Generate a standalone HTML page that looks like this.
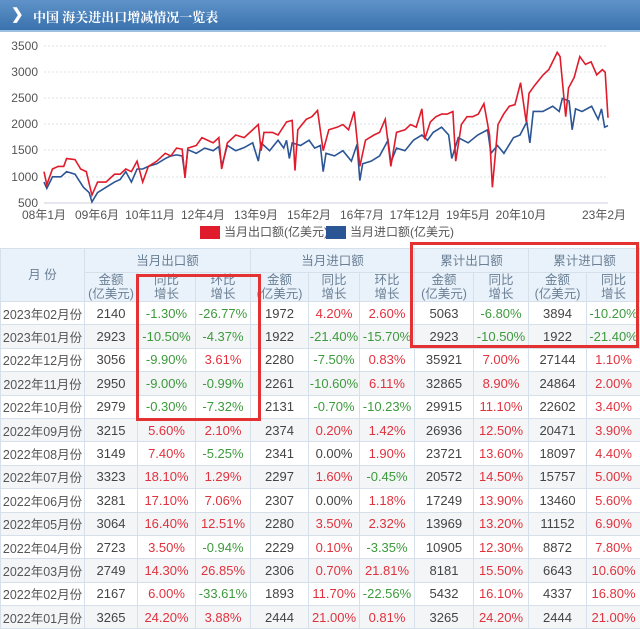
<!DOCTYPE html>
<html><head><meta charset="utf-8"><style>
*{margin:0;padding:0;box-sizing:border-box}
body{width:640px;height:616px;overflow:hidden;background:#fff;font-family:"Liberation Sans","Noto Sans CJK SC",sans-serif;position:relative}
.hdr{position:absolute;left:0;top:0;width:640px;height:32px;background:linear-gradient(#5f93c8,#3a72ae);border-bottom:2px solid #9dbfe0}
.hdr span{position:absolute;left:33px;top:7px;color:#fff;font-size:13px;font-weight:bold;font-family:"Noto Serif CJK SC","Liberation Serif",serif}
.hdr b{position:absolute;left:11px;top:5px;color:#fff;font-size:15px}
svg{position:absolute;left:0;top:34px}
table{position:absolute;left:0;top:248px;border-collapse:collapse;table-layout:fixed;width:640px}
td{border:1px solid #d5e0ea;text-align:center;font-size:13px;color:#444;height:23.4px;padding:0;white-space:nowrap}
tr.h td{background:#e9f2fa;color:#6a7f95;font-size:12.5px;line-height:14px}
tr.g td{background:#f3f5f7}
td.m{color:#555;font-size:12.5px}
.r{color:#e0323e}.gr{color:#3d9a3d}
.box{position:absolute;border:3px solid #e43232}
</style></head><body>
<div class="hdr"><b>&#x276F;</b><span>中国 海关进出口增减情况一览表</span></div>
<svg width="640" height="214" viewBox="0 34 640 214">
<g stroke="#dde3ea" stroke-dasharray="2,2" stroke-width="1">
<line x1="44" x2="608" y1="46" y2="46"/><line x1="44" x2="608" y1="72" y2="72"/><line x1="44" x2="608" y1="98" y2="98"/><line x1="44" x2="608" y1="124" y2="124"/><line x1="44" x2="608" y1="150" y2="150"/><line x1="44" x2="608" y1="177" y2="177"/>
</g>
<line x1="44" x2="608" y1="203" y2="203" stroke="#ccd" />
<g font-size="12" fill="#555" text-anchor="end"><text x="38" y="50">3500</text><text x="38" y="76">3000</text><text x="38" y="102">2500</text><text x="38" y="128">2000</text><text x="38" y="154">1500</text><text x="38" y="181">1000</text><text x="38" y="207">500</text></g>
<g font-size="12" fill="#555" text-anchor="middle"><text x="44" y="219">08年1月</text><text x="97" y="219">09年6月</text><text x="150" y="219">10年11月</text><text x="203" y="219">12年4月</text><text x="256" y="219">13年9月</text><text x="309" y="219">15年2月</text><text x="362" y="219">16年7月</text><text x="415" y="219">17年12月</text><text x="468" y="219">19年5月</text><text x="521" y="219">20年10月</text><text x="604" y="219">23年2月</text></g>
<g transform="translate(44,229.15) scale(2.82,-0.0523)" fill="none">
<polyline vector-effect="non-scaling-stroke" stroke="#2b5595" stroke-width="1.6" points="0,900 1,780 3,1000 6,1000 8,1100 11,1050 14,800 16,700 17,520 19,700 22,800 25,900 27,950 29,1100 31,900 33,1150 35,1150 37,1200 40,1250 43,1350 45,1400 47,1420 49,1400 50,1020 51,1520 54,1450 57,1550 60,1500 62,1580 63,1200 65,1600 68,1500 71,1560 74,1650 76,1300 77,1650 80,1500 83,1700 85,1550 86,1700 87,1350 88,1650 91,1600 94,1700 96,1550 98,1600 99,1100 100,1450 103,1400 106,1500 109,1300 111,1620 112,930 113,1250 116,1300 119,1400 122,1700 123,1280 125,1550 128,1500 131,1700 134,1800 136,1700 138,1850 141,1950 143.5,1800 144.6,1350 146.9,1750 150.4,1650 153.8,1800 157.3,1900 158.5,1450 160.8,1600 163.1,1450 166.5,1750 168.8,1800 171.2,2050 172.3,1650 173.5,2250 176.9,2250 180.4,2350 182.7,2250 183.8,2500 186.2,2450 187.3,1900 188.5,2300 190.8,2250 194.2,2350 196.5,2100 197.7,2300 198.8,1950 200,1980"/>
<polyline vector-effect="non-scaling-stroke" stroke="#e01b2b" stroke-width="1.6" points="0,1100 1,850 3,1150 5,1200 7,1200 8,1350 11,1330 13,1150 15,1100 17,650 19,900 22,900 25,1050 27,1050 29,1150 31,1100 33,1300 35,900 37,1200 40,1300 43,1450 45,1400 47,1550 49,1530 50,980 51,1550 54,1600 56,1750 58,1700 60,1650 62,1750 63,1150 65,1650 68,1800 71,1750 73,1850 76,2000 77,1500 78,1850 81,1850 83,1800 86,2050 88,2080 89,1120 90,1900 93,2100 95,2150 97,2270 99,1500 101,1900 104,1950 106,2000 108,1900 110,2250 112,1200 114,1700 117,1800 119,1850 121,2100 123,1200 125,1850 128,1900 130,2000 132,1950 134,2300 135,1720 137,2050 139,2150 141,2200 143,2200 145,2250 146,1300 148,2000 150,2150 152,2150 154,2200 156,2400 158,1800 159,800 161,2000 163,2200 165,2350 167,2380 169,2800 171,2050 172,2600 174,2750 177,2950 179,3050 182,3380 183,3300 185,2150 186,2700 188,2900 190,3300 192,3150 194,3200 196,2950 198,3050 199,3000 200,2130"/>
</g>
<rect x="200" y="226" width="20" height="13" fill="#e01b2b"/><text x="224" y="236" font-size="12" fill="#555">当月出口额(亿美元)</text>
<rect x="326" y="226" width="20" height="13" fill="#2b5595"/><text x="350" y="236" font-size="12" fill="#555">当月进口额(亿美元)</text>
</svg>
<table>
<colgroup><col style="width:84px"><col style="width:53px"><col style="width:58px"><col style="width:55px"><col style="width:58px"><col style="width:51px"><col style="width:55px"><col style="width:59px"><col style="width:55px"><col style="width:58px"><col style="width:54px"></colgroup>
<tr class="h"><td rowspan="2" style="height:51px">月 份</td><td colspan="3" style="height:24px">当月出口额</td><td colspan="3">当月进口额</td><td colspan="2">累计出口额</td><td colspan="2">累计进口额</td></tr>
<tr class="h"><td style="height:27px">金额<br>(亿美元)</td><td>同比<br>增长</td><td>环比<br>增长</td><td>金额<br>(亿美元)</td><td>同比<br>增长</td><td>环比<br>增长</td><td>金额<br>(亿美元)</td><td>同比<br>增长</td><td>金额<br>(亿美元)</td><td>同比<br>增长</td></tr>
<tr><td class="m">2023年02月份</td><td>2140</td><td class="gr">-1.30%</td><td class="gr">-26.77%</td><td>1972</td><td class="r">4.20%</td><td class="r">2.60%</td><td>5063</td><td class="gr">-6.80%</td><td>3894</td><td class="gr">-10.20%</td></tr>
<tr class="g"><td class="m">2023年01月份</td><td>2923</td><td class="gr">-10.50%</td><td class="gr">-4.37%</td><td>1922</td><td class="gr">-21.40%</td><td class="gr">-15.70%</td><td>2923</td><td class="gr">-10.50%</td><td>1922</td><td class="gr">-21.40%</td></tr>
<tr><td class="m">2022年12月份</td><td>3056</td><td class="gr">-9.90%</td><td class="r">3.61%</td><td>2280</td><td class="gr">-7.50%</td><td class="r">0.83%</td><td>35921</td><td class="r">7.00%</td><td>27144</td><td class="r">1.10%</td></tr>
<tr class="g"><td class="m">2022年11月份</td><td>2950</td><td class="gr">-9.00%</td><td class="gr">-0.99%</td><td>2261</td><td class="gr">-10.60%</td><td class="r">6.11%</td><td>32865</td><td class="r">8.90%</td><td>24864</td><td class="r">2.00%</td></tr>
<tr><td class="m">2022年10月份</td><td>2979</td><td class="gr">-0.30%</td><td class="gr">-7.32%</td><td>2131</td><td class="gr">-0.70%</td><td class="gr">-10.23%</td><td>29915</td><td class="r">11.10%</td><td>22602</td><td class="r">3.40%</td></tr>
<tr class="g"><td class="m">2022年09月份</td><td>3215</td><td class="r">5.60%</td><td class="r">2.10%</td><td>2374</td><td class="r">0.20%</td><td class="r">1.42%</td><td>26936</td><td class="r">12.50%</td><td>20471</td><td class="r">3.90%</td></tr>
<tr><td class="m">2022年08月份</td><td>3149</td><td class="r">7.40%</td><td class="gr">-5.25%</td><td>2341</td><td>0.00%</td><td class="r">1.90%</td><td>23721</td><td class="r">13.60%</td><td>18097</td><td class="r">4.40%</td></tr>
<tr class="g"><td class="m">2022年07月份</td><td>3323</td><td class="r">18.10%</td><td class="r">1.29%</td><td>2297</td><td class="r">1.60%</td><td class="gr">-0.45%</td><td>20572</td><td class="r">14.50%</td><td>15757</td><td class="r">5.00%</td></tr>
<tr><td class="m">2022年06月份</td><td>3281</td><td class="r">17.10%</td><td class="r">7.06%</td><td>2307</td><td>0.00%</td><td class="r">1.18%</td><td>17249</td><td class="r">13.90%</td><td>13460</td><td class="r">5.60%</td></tr>
<tr class="g"><td class="m">2022年05月份</td><td>3064</td><td class="r">16.40%</td><td class="r">12.51%</td><td>2280</td><td class="r">3.50%</td><td class="r">2.32%</td><td>13969</td><td class="r">13.20%</td><td>11152</td><td class="r">6.90%</td></tr>
<tr><td class="m">2022年04月份</td><td>2723</td><td class="r">3.50%</td><td class="gr">-0.94%</td><td>2229</td><td class="r">0.10%</td><td class="gr">-3.35%</td><td>10905</td><td class="r">12.30%</td><td>8872</td><td class="r">7.80%</td></tr>
<tr class="g"><td class="m">2022年03月份</td><td>2749</td><td class="r">14.30%</td><td class="r">26.85%</td><td>2306</td><td class="r">0.70%</td><td class="r">21.81%</td><td>8181</td><td class="r">15.50%</td><td>6643</td><td class="r">10.60%</td></tr>
<tr><td class="m">2022年02月份</td><td>2167</td><td class="r">6.00%</td><td class="gr">-33.61%</td><td>1893</td><td class="r">11.70%</td><td class="gr">-22.56%</td><td>5432</td><td class="r">16.10%</td><td>4337</td><td class="r">16.80%</td></tr>
<tr class="g"><td class="m">2022年01月份</td><td>3265</td><td class="r">24.20%</td><td class="r">3.88%</td><td>2444</td><td class="r">21.00%</td><td class="r">0.81%</td><td>3265</td><td class="r">24.20%</td><td>2444</td><td class="r">21.00%</td></tr>
</table>
<div class="box" style="left:136px;top:274px;width:125px;height:147px"></div>
<div class="box" style="left:410px;top:242px;width:229px;height:106px"></div>
</body></html>
